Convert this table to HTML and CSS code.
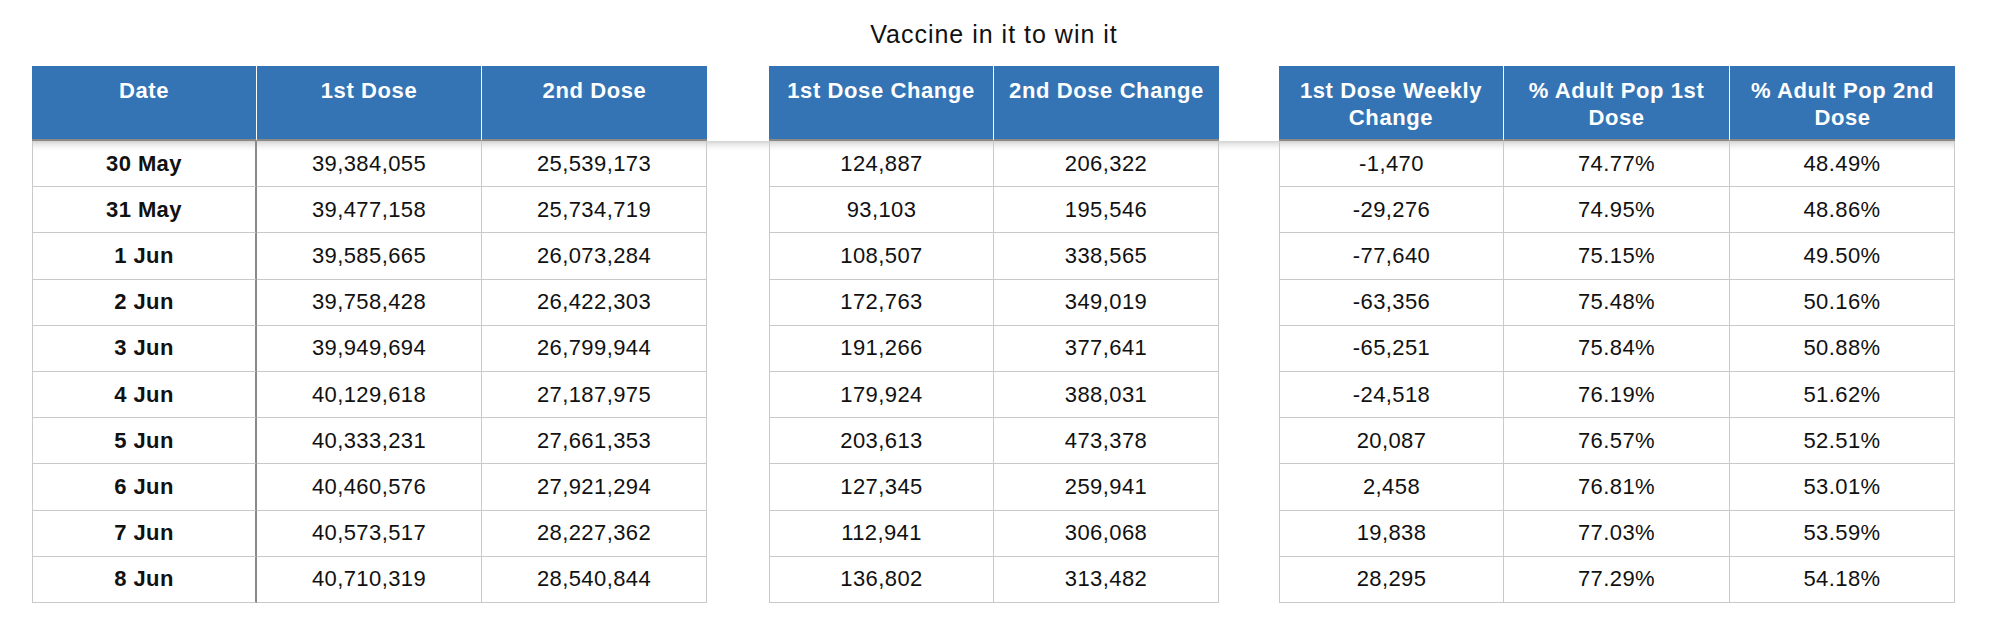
FILE: index.html
```html
<!DOCTYPE html>
<html>
<head>
<meta charset="utf-8">
<title>Vaccine in it to win it</title>
<link rel="stylesheet" href="styles.css">
</head>
<body>
<h1 class="title">Vaccine in it to win it</h1>
<div class="sheet">
  <div class="grid head">
    <div class="h">Date</div><div class="h">1st Dose</div><div class="h end">2nd Dose</div>
    <div class="sp"></div>
    <div class="h">1st Dose Change</div><div class="h end">2nd Dose Change</div>
    <div class="sp"></div>
    <div class="h">1st Dose Weekly Change</div><div class="h">% Adult Pop 1st Dose</div><div class="h end">% Adult Pop 2nd Dose</div>
  </div>
  <div class="grid body">
    <div class="c first date">30 May</div><div class="c">39,384,055</div><div class="c">25,539,173</div><div class="sp"></div><div class="c first">124,887</div><div class="c">206,322</div><div class="sp"></div><div class="c first">-1,470</div><div class="c">74.77%</div><div class="c">48.49%</div>
    <div class="c first date">31 May</div><div class="c">39,477,158</div><div class="c">25,734,719</div><div class="sp"></div><div class="c first">93,103</div><div class="c">195,546</div><div class="sp"></div><div class="c first">-29,276</div><div class="c">74.95%</div><div class="c">48.86%</div>
    <div class="c first date">1 Jun</div><div class="c">39,585,665</div><div class="c">26,073,284</div><div class="sp"></div><div class="c first">108,507</div><div class="c">338,565</div><div class="sp"></div><div class="c first">-77,640</div><div class="c">75.15%</div><div class="c">49.50%</div>
    <div class="c first date">2 Jun</div><div class="c">39,758,428</div><div class="c">26,422,303</div><div class="sp"></div><div class="c first">172,763</div><div class="c">349,019</div><div class="sp"></div><div class="c first">-63,356</div><div class="c">75.48%</div><div class="c">50.16%</div>
    <div class="c first date">3 Jun</div><div class="c">39,949,694</div><div class="c">26,799,944</div><div class="sp"></div><div class="c first">191,266</div><div class="c">377,641</div><div class="sp"></div><div class="c first">-65,251</div><div class="c">75.84%</div><div class="c">50.88%</div>
    <div class="c first date">4 Jun</div><div class="c">40,129,618</div><div class="c">27,187,975</div><div class="sp"></div><div class="c first">179,924</div><div class="c">388,031</div><div class="sp"></div><div class="c first">-24,518</div><div class="c">76.19%</div><div class="c">51.62%</div>
    <div class="c first date">5 Jun</div><div class="c">40,333,231</div><div class="c">27,661,353</div><div class="sp"></div><div class="c first">203,613</div><div class="c">473,378</div><div class="sp"></div><div class="c first">20,087</div><div class="c">76.57%</div><div class="c">52.51%</div>
    <div class="c first date">6 Jun</div><div class="c">40,460,576</div><div class="c">27,921,294</div><div class="sp"></div><div class="c first">127,345</div><div class="c">259,941</div><div class="sp"></div><div class="c first">2,458</div><div class="c">76.81%</div><div class="c">53.01%</div>
    <div class="c first date">7 Jun</div><div class="c">40,573,517</div><div class="c">28,227,362</div><div class="sp"></div><div class="c first">112,941</div><div class="c">306,068</div><div class="sp"></div><div class="c first">19,838</div><div class="c">77.03%</div><div class="c">53.59%</div>
    <div class="c first date">8 Jun</div><div class="c">40,710,319</div><div class="c">28,540,844</div><div class="sp"></div><div class="c first">136,802</div><div class="c">313,482</div><div class="sp"></div><div class="c first">28,295</div><div class="c">77.29%</div><div class="c">54.18%</div>
  </div>
</div>
</body>
</html>
```

FILE: styles.css
```css
* { box-sizing: border-box; }
html, body { margin: 0; padding: 0; background: #fff; }
body {
  font-family: "Liberation Sans", Arial, sans-serif;
  color: #111;
  width: 1992px;
}
.title {
  margin: 19px 0 17px 0;
  width: 1988px;
  text-align: center;
  font-size: 25px;
  line-height: 30px;
  font-weight: normal;
  letter-spacing: 1px;
  color: #111;
}
.sheet {
  margin-left: 32px;
  width: 1923px;
}
.grid {
  display: grid;
  grid-template-columns: 225px 225px 225px 62px 225px 225px 60px 225px 226px 225px;
}
.head { grid-auto-rows: 75px; }
.h {
  background: #3474b5;
  color: #fff;
  font-weight: bold;
  font-size: 22px;
  letter-spacing: 0.6px;
  line-height: 27px;
  text-align: center;
  padding: 11px 10px 0 10px;
  border-right: 1px solid #fff;
  border-bottom: 2px solid #8b8986;
}
.h.end { border-right: none; }
.body {
  grid-auto-rows: 46.2px;
  background: linear-gradient(to bottom, #d2d2d2 0, #e8e8e8 3px, #f8f8f8 7px, #fff 10px);
}
.c {
  display: flex;
  align-items: center;
  justify-content: center;
  font-size: 22px;
  letter-spacing: 0.4px;
  color: #111;
  border-right: 1px solid #c9c9c9;
  border-bottom: 1px solid #c9c9c9;
}
.c.first { border-left: 1px solid #c9c9c9; }
.c.date {
  font-weight: bold;
  border-right: 2px solid #8b8986;
}
.sp { background: transparent; }
```
